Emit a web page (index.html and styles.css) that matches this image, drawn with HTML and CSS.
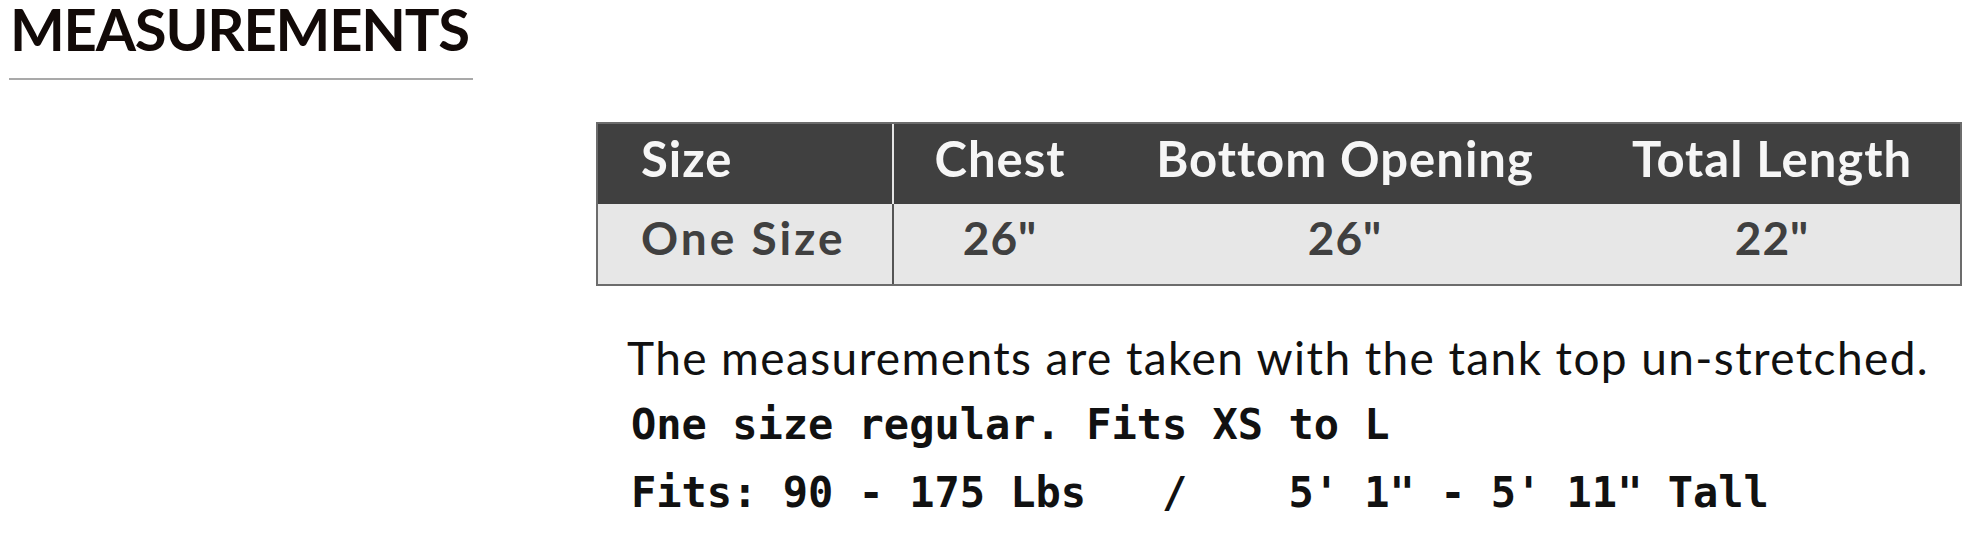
FILE: index.html
```html
<!DOCTYPE html>
<html lang="en">
<head>
<meta charset="utf-8">
<title>Measurements</title>
<link rel="stylesheet" href="styles.css">
</head>
<body>
<section class="measurements">
  <h2 class="title">MEASUREMENTS</h2>
  <div class="content">
    <table class="size-table">
      <colgroup>
        <col class="c1"><col class="c2"><col class="c3"><col class="c4">
      </colgroup>
      <thead>
        <tr>
          <th class="first">Size</th>
          <th>Chest</th>
          <th>Bottom Opening</th>
          <th>Total Length</th>
        </tr>
      </thead>
      <tbody>
        <tr>
          <td class="first">One Size</td>
          <td>26"</td>
          <td>26"</td>
          <td>22"</td>
        </tr>
      </tbody>
    </table>
    <p class="note">The measurements are taken with the tank top un-stretched.</p>
    <div class="fit">
      <div class="fit-line">One size regular. Fits XS to L</div>
      <div class="fit-line">Fits: 90 - 175 Lbs   /    5' 1" - 5' 11" Tall</div>
    </div>
  </div>
</section>
</body>
</html>
```
FILE: styles.css
```css
html, body {
  margin: 0;
  padding: 0;
  background: #ffffff;
}

.measurements {
  display: flex;
  flex-direction: column;
  align-items: flex-start;
}

.title {
  margin: 0 0 0 9px;
  padding: 0 4px 20px 1px;
  border-bottom: 2px solid #a9a9a9;
  font-family: "Lato", "Liberation Sans", sans-serif;
  font-weight: 700;
  font-size: 58px;
  line-height: 58px;
  letter-spacing: -1.2px;
  color: #120a08;
  white-space: nowrap;
}

.content {
  margin: 42px 0 0 596px;
  display: flex;
  flex-direction: column;
  align-items: flex-start;
}

.size-table {
  width: 1366px;
  table-layout: fixed;
  border-collapse: separate;
  border-spacing: 0;
  border: 2px solid #6c6c6c;
  font-family: "Lato", "Liberation Sans", sans-serif;
  font-weight: 700;
}

.c1 { width: 296px; }
.c2 { width: 212px; }
.c3 { width: 478px; }
.c4 { width: 376px; }

.size-table th {
  background: #404040;
  color: #f6f6f6;
  font-size: 49px;
  line-height: 49px;
  letter-spacing: 1px;
  padding: 10px 0 21px;
  text-align: center;
  font-weight: 700;
  white-space: nowrap;
}

.size-table td {
  background: #e7e7e7;
  color: #404040;
  font-size: 46px;
  line-height: 46px;
  letter-spacing: 1px;
  padding: 11px 0 23px;
  text-align: center;
  white-space: nowrap;
}

.size-table th.first,
.size-table td.first {
  text-align: left;
  padding-left: 43px;
}

.size-table td.first {
  letter-spacing: 3px;
}

.size-table th.first {
  border-right: 2px solid #e4e4e4;
}

.size-table td.first {
  border-right: 2px solid #555555;
}

.note {
  margin: 49px 0 0 31px;
  font-family: "Lato", "Liberation Sans", sans-serif;
  font-weight: 400;
  font-size: 46px;
  line-height: 46px;
  letter-spacing: 1.4px;
  color: #111111;
  white-space: nowrap;
}

.fit {
  margin: 10px 0 0 35px;
  display: flex;
  flex-direction: column;
}

.fit-line {
  font-family: "DejaVu Sans Mono", "Liberation Mono", monospace;
  font-weight: 700;
  font-size: 42px;
  line-height: 68px;
  color: #111111;
  white-space: pre;
}
```
